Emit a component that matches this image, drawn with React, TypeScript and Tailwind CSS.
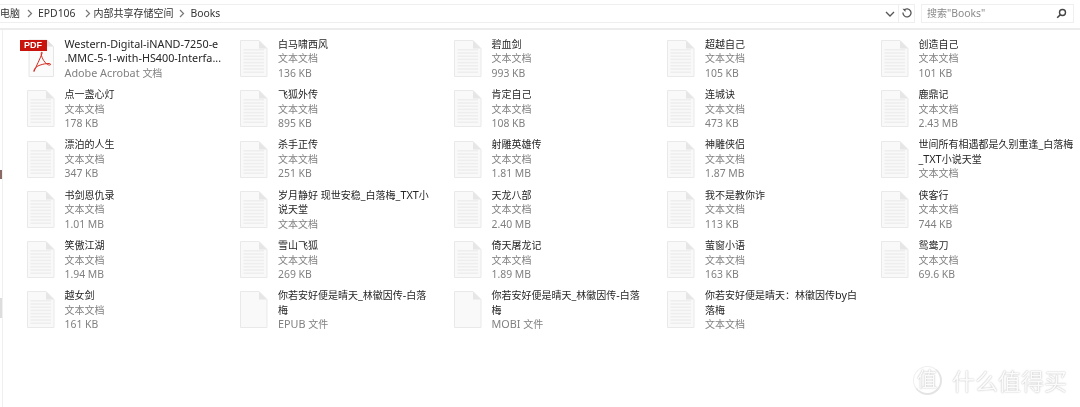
import React from "react";

type Kind = "pdf" | "txt" | "blank";
type Item = { n: string; t: string; s?: string; k?: Kind };

const items: Item[] = [
  { n: "Western-Digital-iNAND-7250-e\n.MMC-5-1-with-HS400-Interfa...", t: "Adobe Acrobat 文档", k: "pdf" },
  { n: "白马啸西风", t: "文本文档", s: "136 KB" },
  { n: "碧血剑", t: "文本文档", s: "993 KB" },
  { n: "超越自己", t: "文本文档", s: "105 KB" },
  { n: "创造自己", t: "文本文档", s: "101 KB" },
  { n: "点一盏心灯", t: "文本文档", s: "178 KB" },
  { n: "飞狐外传", t: "文本文档", s: "895 KB" },
  { n: "肯定自己", t: "文本文档", s: "108 KB" },
  { n: "连城诀", t: "文本文档", s: "473 KB" },
  { n: "鹿鼎记", t: "文本文档", s: "2.43 MB" },
  { n: "漂泊的人生", t: "文本文档", s: "347 KB" },
  { n: "杀手正传", t: "文本文档", s: "251 KB" },
  { n: "射雕英雄传", t: "文本文档", s: "1.81 MB" },
  { n: "神雕侠侣", t: "文本文档", s: "1.87 MB" },
  { n: "世间所有相遇都是久别重逢_白落梅\n_TXT小说天堂", t: "文本文档" },
  { n: "书剑恩仇录", t: "文本文档", s: "1.01 MB" },
  { n: "岁月静好 现世安稳_白落梅_TXT小\n说天堂", t: "文本文档" },
  { n: "天龙八部", t: "文本文档", s: "2.40 MB" },
  { n: "我不是教你诈", t: "文本文档", s: "113 KB" },
  { n: "侠客行", t: "文本文档", s: "744 KB" },
  { n: "笑傲江湖", t: "文本文档", s: "1.94 MB" },
  { n: "雪山飞狐", t: "文本文档", s: "269 KB" },
  { n: "倚天屠龙记", t: "文本文档", s: "1.89 MB" },
  { n: "萤窗小语", t: "文本文档", s: "163 KB" },
  { n: "鸳鸯刀", t: "文本文档", s: "69.6 KB" },
  { n: "越女剑", t: "文本文档", s: "161 KB" },
  { n: "你若安好便是晴天_林徽因传-白落\n梅", t: "EPUB 文件", k: "blank" },
  { n: "你若安好便是晴天_林徽因传-白落\n梅", t: "MOBI 文件", k: "blank" },
  { n: "你若安好便是晴天：林徽因传by白\n落梅", t: "文本文档" },
];

function Mixed({ text }: { text: string }) {
  const parts = text.split(/([\u3000-\u9fff\uff00-\uffef]+)/);
  return (
    <>
      {parts.map((p, i) =>
        i % 2 === 1 ? (
          <span key={i} className="text-[10px]">
            {p}
          </span>
        ) : (
          <span key={i}>{p}</span>
        )
      )}
    </>
  );
}

function DocIcon({ kind }: { kind: Kind }) {
  const lines: number[] = [];
  if (kind === "txt") {
    for (let y = 10; y < 34; y += 3.2) lines.push(y);
  }
  return (
    <svg width="28" height="39" viewBox="0 0 28 39" className="shrink-0">
      <path d="M0.5 1.5H19L27 9.5V37.5H0.5Z" fill="#f9f9f9" stroke="#e9e9e9" />
      <path d="M19 1.5V9.5H27Z" fill="#e6e6e6" />
      {lines.map((y) => (
        <rect key={y} x="3.5" y={y} width="20.5" height="1.6" fill="#eeeeee" />
      ))}
    </svg>
  );
}

function PdfIcon() {
  return (
    <div className="relative w-[28px] h-[39px] shrink-0">
      <svg width="34" height="39" viewBox="0 0 34 39" className="absolute left-[-7px] top-0">
        <path d="M9 1H27L33.5 7.5V37.5H9Z" fill="#fbfbfb" stroke="#e6e6e6" />
        <path d="M27 1V7.5H33.5Z" fill="#e2e2e2" />
        <path
          d="M14 32.5C16 27.5 20 20 22 14.5C22.5 13 21.5 12.5 21.2 14C21 17 23.5 23 27.5 25.5C29.5 26.5 31 26 30.5 25C30 24 24 24.5 19 26.5C16 27.7 13.5 30.5 14 32.5Z"
          fill="none"
          stroke="#d22b20"
          strokeWidth="1"
        />
      </svg>
      <div className="absolute left-[-7px] top-[1px] w-[27px] h-[11px] bg-[#c8140c] text-white text-[9px] font-bold leading-[11px] text-center font-['Liberation_Sans',sans-serif]">
        PDF
      </div>
    </div>
  );
}

function Tile({ item }: { item: Item }) {
  const kind = item.k ?? "txt";
  return (
    <div className="flex gap-[10px] items-start">
      {kind === "pdf" ? <PdfIcon /> : <DocIcon kind={kind} />}
      <div className="text-[10.8px] leading-[14.5px] -mt-[2.2px] whitespace-pre-line w-[172px]">
        <div className="text-[#262626]">
          <Mixed text={item.n} />
        </div>
        <div className="text-[#808080]">
          <Mixed text={item.t} />
        </div>
        {item.s && <div className="text-[#808080] text-[10.4px]">{item.s}</div>}
      </div>
    </div>
  );
}

function Sep() {
  return (
    <svg width="6" height="9" viewBox="0 0 6 9" className="shrink-0">
      <path d="M1 1L4.5 4.5L1 8" fill="none" stroke="#777" strokeWidth="1.2" />
    </svg>
  );
}

export default function App() {
  return (
    <div className="relative w-[1080px] h-[407px] overflow-hidden bg-white blur-[0.3px] font-['Noto_Sans','Noto_Sans_CJK_SC',sans-serif]">
      <div className="flex h-[30px] border-b-2 border-[#ececec] pt-[4px]">
        <div className="flex-1 h-[19px] flex items-center border-y border-r border-[#efefef] text-[10.4px] text-[#333333]">
          <Mixed text="电脑" />
          <span className="ml-[7px] mr-[5px]">
            <Sep />
          </span>
          <span>EPD106</span>
          <span className="ml-[10px] mr-[2px]">
            <Sep />
          </span>
          <Mixed text="内部共享存储空间" />
          <span className="ml-[6px] mr-[5px]">
            <Sep />
          </span>
          <span>Books</span>
          <div className="ml-auto flex items-center h-full">
            <svg width="10" height="6" viewBox="0 0 10 6" className="mr-[3px]">
              <path d="M1 1L5 5L9 1" fill="none" stroke="#555" strokeWidth="1.3" />
            </svg>
            <div className="h-full w-[16px] border-l border-[#efefef] flex items-center justify-center">
              <svg width="11" height="11" viewBox="0 0 11 11">
                <path d="M3 2.2A4 4 0 1 1 2 4.5" fill="none" stroke="#555" strokeWidth="1.3" />
                <path d="M1.5 0.8L4.5 1V4Z" fill="#555" />
              </svg>
            </div>
          </div>
        </div>
        <div className="w-[153px] h-[19px] ml-[6px] mr-[6px] border border-[#efefef] flex items-center pl-[5px] pr-[6px] text-[10.4px] text-[#8a8a8a]">
          <span>
            <Mixed text="搜索" />
            "Books"
          </span>
          <svg width="11" height="11" viewBox="0 0 11 11" className="ml-auto">
            <circle cx="6.5" cy="4.5" r="3" fill="none" stroke="#444" strokeWidth="1.4" />
            <path d="M4.3 6.7L1.2 9.8" stroke="#444" strokeWidth="1.6" />
          </svg>
        </div>
      </div>
      <div className="h-[377px] ml-[2px] border-l border-[#f0f0f0] pl-[23.5px] pt-[9px]">
        <div className="grid grid-cols-[repeat(5,213.5px)] auto-rows-[50.3px]">
          {items.map((it, i) => (
            <Tile key={i} item={it} />
          ))}
        </div>
      </div>
      <div className="absolute left-0 top-[170px] w-[2px] h-[9px] bg-[#8a6a66]" />
      <div className="absolute left-0 top-[298px] w-[2px] h-[20px] bg-[#dddddd]" />
      <div className="absolute left-[913px] top-[366px] flex items-center gap-[10px] text-[#fbfbfb] [text-shadow:0_0_1.5px_rgba(0,0,0,0.35)]">
        <div className="w-[29px] h-[29px] rounded-full border border-[#f0f0f0] border-b-2 border-r-2 border-b-[#e4e4e4] border-r-[#e4e4e4] flex items-center justify-center text-[20px] leading-none">
          值
        </div>
        <div className="text-[23px] leading-none font-['Noto_Sans_CJK_SC',sans-serif]">什么值得买</div>
      </div>
    </div>
  );
}
